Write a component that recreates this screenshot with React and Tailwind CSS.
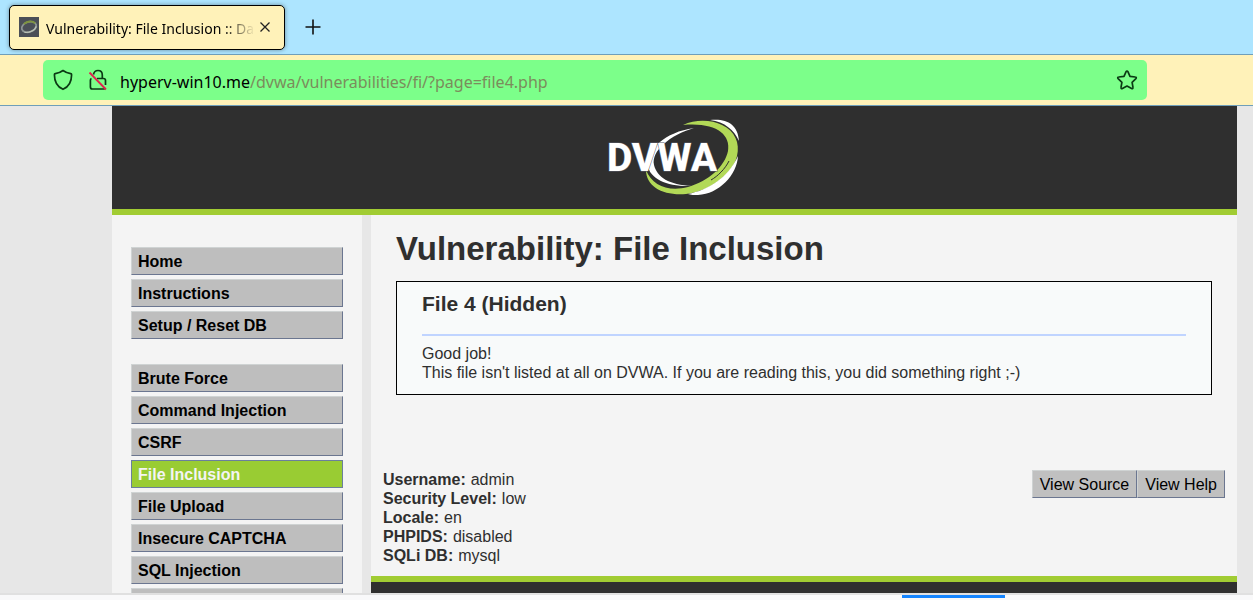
import clsx from "clsx";

const menuGroups = [
  ["Home", "Instructions", "Setup / Reset DB"],
  [
    "Brute Force",
    "Command Injection",
    "CSRF",
    "File Inclusion",
    "File Upload",
    "Insecure CAPTCHA",
    "SQL Injection",
    "SQL Injection (Blind)",
  ],
];

const systemInfo = [
  ["Username", "admin"],
  ["Security Level", "low"],
  ["Locale", "en"],
  ["PHPIDS", "disabled"],
  ["SQLi DB", "mysql"],
];

function Favicon() {
  return (
    <svg viewBox="0 0 20 20" className="size-5 shrink-0" aria-hidden="true">
      <rect width="20" height="20" fill="#4b4f57" />
      <g fill="none" transform="rotate(-18 10 10)">
        <ellipse cx="10" cy="10" rx="7.5" ry="5" stroke="#8d9494" strokeWidth="1.8" />
        <path d="M6 5.500C10 4 15 4.500 17 8.500" stroke="#7f9440" strokeWidth="1.800" />
        <path d="M4 13.500C8 16 15 15 17 11.500" stroke="#b9c0b4" strokeWidth="1.300" />
      </g>
    </svg>
  );
}

function ShieldIcon() {
  return (
    <svg viewBox="0 0 20 22" className="h-[22px] w-5" fill="none" stroke="#0b3a14" strokeWidth="1.7" strokeLinejoin="round">
      <path d="M10 1.500C7.500 3.300 4.800 4.200 2.300 4.600C1.700 4.700 1.400 5.100 1.400 5.700C1.400 12.500 3.600 17.500 10 20.300C16.400 17.500 18.600 12.500 18.600 5.700C18.600 5.100 18.300 4.700 17.700 4.600C15.200 4.200 12.500 3.300 10 1.500Z" />
    </svg>
  );
}

function InsecureLockIcon() {
  return (
    <svg viewBox="0 0 20 22" className="h-[22px] w-5" fill="none">
      <path
        d="M5.500 5.500C6 2.800 7.700 1.500 10 1.500C12.700 1.500 14.300 3.300 14.300 6V9.500M3.500 9.500C2.800 9.800 2.400 10.400 2.400 11.200V18C2.400 19.200 3.200 20 4.400 20H15.500C16.300 20 17 19.500 17.300 18.800M9 9.500H15.500C16.700 9.500 17.500 10.300 17.500 11.500V16"
        stroke="#0b3a14"
        strokeWidth="1.700"
      />
      <path d="M1.500 3.500L18 20.500" stroke="#e0234e" strokeWidth="1.800" />
    </svg>
  );
}

function StarIcon() {
  return (
    <svg viewBox="0 0 22 22" className="size-[22px]" fill="none" stroke="#0b3a14" strokeWidth="1.700" strokeLinejoin="round">
      <path d="M11 2C11.400 2 11.700 2.200 11.900 2.600L14 7.300L19.300 8C20.300 8.100 20.600 9 19.900 9.700L16.100 13.300L17 18.500C17.200 19.500 16.400 20 15.600 19.600L11 17.100L6.400 19.600C5.600 20 4.800 19.500 5 18.500L5.900 13.300L2.100 9.700C1.400 9 1.700 8.100 2.700 8L8 7.300L10.100 2.600C10.300 2.200 10.600 2 11 2Z" />
    </svg>
  );
}

function Logo() {
  return (
    <svg viewBox="0 2 134 78" className="h-[78px] w-[134px]" role="img" aria-label="DVWA">
      {/* rings behind the letters */}
      <path d="M86 11C62 18 43 34 46 48C49 60 61 68 84 69C60 70 42 62 40 49C38 33 57 15 86 11Z" fill="#fff" />
      <path d="M75 8C88 2 104 3 114 8C127 14 132 26 129 39C125 56 103 74 78 77C56 79 38 70 38 53C44 69 61 75 80 70C101 64 117 49 120 34C123 17 107 5 75 8Z" fill="#b2d957" />
      <path d="M102 3C118 1 130 7 131 24C126 13 117 5 102 3Z" fill="#fff" />
      <path d="M130 39C129 58 111 77 90 78C86 78 83 78 80 77C100 73 120 61 130 39Z" fill="#fff" />
      <path d="M121 44C117 52 110 59 103 63" fill="none" stroke="#2f2f2f" strokeWidth="1" />
      <text
        x="-1"
        y="54"
        fontFamily="Roboto, 'Open Sans', sans-serif"
        fontSize="39"
        fontWeight="800"
        fill="#fff"
        stroke="#5b5d68"
        strokeWidth="1"
        paintOrder="stroke"
      >
        DVWA
      </text>
    </svg>
  );
}

function BrowserChrome() {
  return (
    <div className="shrink-0 font-['Noto_Sans','Open_Sans',sans-serif] text-black">
      <div className="flex h-[55px] items-center border-b border-[#6f9fba] bg-[#ade5ff] pl-[9px]">
        <div className="flex h-[45px] w-[276px] items-center rounded-[5px] border border-black bg-[#fff2b9] pr-[13px] pl-[9px] shadow-[0_0_4px_rgba(0,0,0,0.4)]">
          <Favicon />
          <span className="ml-[7px] flex-1 overflow-hidden bg-linear-to-r from-black from-85% to-transparent bg-clip-text pt-[3px] text-sm whitespace-nowrap text-transparent">
            Vulnerability: File Inclusion :: Damn
          </span>
          <button className="ml-1" aria-label="Close tab">
            <svg viewBox="0 0 12 12" className="size-3" stroke="#222" strokeWidth="1.300">
              <path d="M1.500 1.500L10.500 10.500M10.500 1.500L1.500 10.500" />
            </svg>
          </button>
        </div>
        <button className="ml-5" aria-label="New tab">
          <svg viewBox="0 0 16 16" className="size-4" stroke="#111" strokeWidth="1.600">
            <path d="M8 0.500V15.500M0.500 8H15.500" />
          </svg>
        </button>
      </div>
      <div className="flex h-[51px] items-center border-b border-[#6f9fba] bg-[#fff2b9] pr-[106px] pl-[43px]">
        <div className="flex h-10 flex-1 items-center rounded-[5px] bg-[#7cff8a] pr-[9px] pl-[10px]">
          <ShieldIcon />
          <span className="ml-[15px]">
            <InsecureLockIcon />
          </span>
          <a href="#" className="ml-3 flex-1 pt-[3px] text-base text-[#7b8c5c]">
            <span className="text-black">hyperv-win10.me</span>
            /dvwa/vulnerabilities/fi/?page=file4.php
          </a>
          <button aria-label="Bookmark this page">
            <StarIcon />
          </button>
        </div>
      </div>
    </div>
  );
}

function MainMenu() {
  return (
    <nav className="flex w-[250px] shrink-0 flex-col gap-[25px] bg-[#f4f4f4] px-[19px] pt-8">
      {menuGroups.map((group) => (
        <ul key={group[0]} className="flex flex-col gap-1">
          {group.map((item) => (
            <li key={item}>
              <a
                href="#"
                className={clsx(
                  "flex h-7 items-center border pt-[2px] pl-[6px] text-base leading-6 font-bold",
                  item === "File Inclusion"
                    ? "border-[#6b7f9c] bg-[#9c3] text-[#f4f4f4]"
                    : "border-t-[#cfd3d3] border-r-[#6b7690] border-b-[#6b7690] border-l-[#cfd3d3] bg-[#bebebe] text-black"
                )}
              >
                {item}
              </a>
            </li>
          ))}
        </ul>
      ))}
    </nav>
  );
}

function PopupButton({ children }) {
  return (
    <button className="h-7 border border-t-[#cfd3d3] border-r-[#6b7690] border-b-[#6b7690] border-l-[#cfd3d3] bg-[#c0c0c0] px-[7px] pt-[2px] text-base text-black">
      {children}
    </button>
  );
}

function App() {
  return (
    <div className="flex h-screen flex-col overflow-hidden bg-[#e7e7e7]">
      <BrowserChrome />

      <div className="mr-4 ml-28 flex min-h-0 flex-1 flex-col overflow-hidden font-['Liberation_Sans',Arial,sans-serif] text-[#2f2f2f]">
        <header className="flex h-[109px] shrink-0 items-center justify-center border-b-[6px] border-[#a1cc33] bg-[#2f2f2f]">
          <Logo />
        </header>

        <div className="flex gap-[9px]">
          <MainMenu />
          <div className="flex-1 bg-[#f4f4f4]">
            <main className="px-[25px] pt-[14px]">
              <h1 className="text-[33px] leading-10 font-bold">
                Vulnerability: File Inclusion
              </h1>
              <section className="mt-3 border border-black bg-[#f8fafa] px-[25px] pt-[10px] pb-3">
                <h2 className="text-[21px] leading-6 font-bold">File 4 (Hidden)</h2>
                <hr className="mt-[18px] mb-2 border-t-2 border-[#c0d4ff]" />
                <p className="text-base leading-[19px]">
                  Good job!
                  <br />
                  This file isn't listed at all on DVWA. If you are reading this,
                  you did something right ;-)
                </p>
              </section>
            </main>

            <div className="mt-[75px] flex items-start justify-between pr-3 pb-[11px] pl-3">
              <dl className="text-base leading-[19px]">
                {systemInfo.map(([label, value]) => (
                  <div key={label} className="flex gap-[5px]">
                    <dt className="font-bold">{label}:</dt>
                    <dd>{value}</dd>
                  </div>
                ))}
              </dl>
              <div className="flex">
                <PopupButton>View Source</PopupButton>
                <PopupButton>View Help</PopupButton>
              </div>
            </div>

            <footer className="h-20 border-t-[6px] border-[#a1cc33] bg-[#2f2f2f]" />
          </div>
        </div>
      </div>

      {/* top edge of the developer tools panel */}
      <div className="flex h-[7px] shrink-0 justify-end border-t-2 border-[#e0e0e0] bg-[#f9f9fa] pr-[248px]">
        <div className="h-[3px] w-[103px] bg-[#1484ff]" />
      </div>
    </div>
  );
}

export default App;
